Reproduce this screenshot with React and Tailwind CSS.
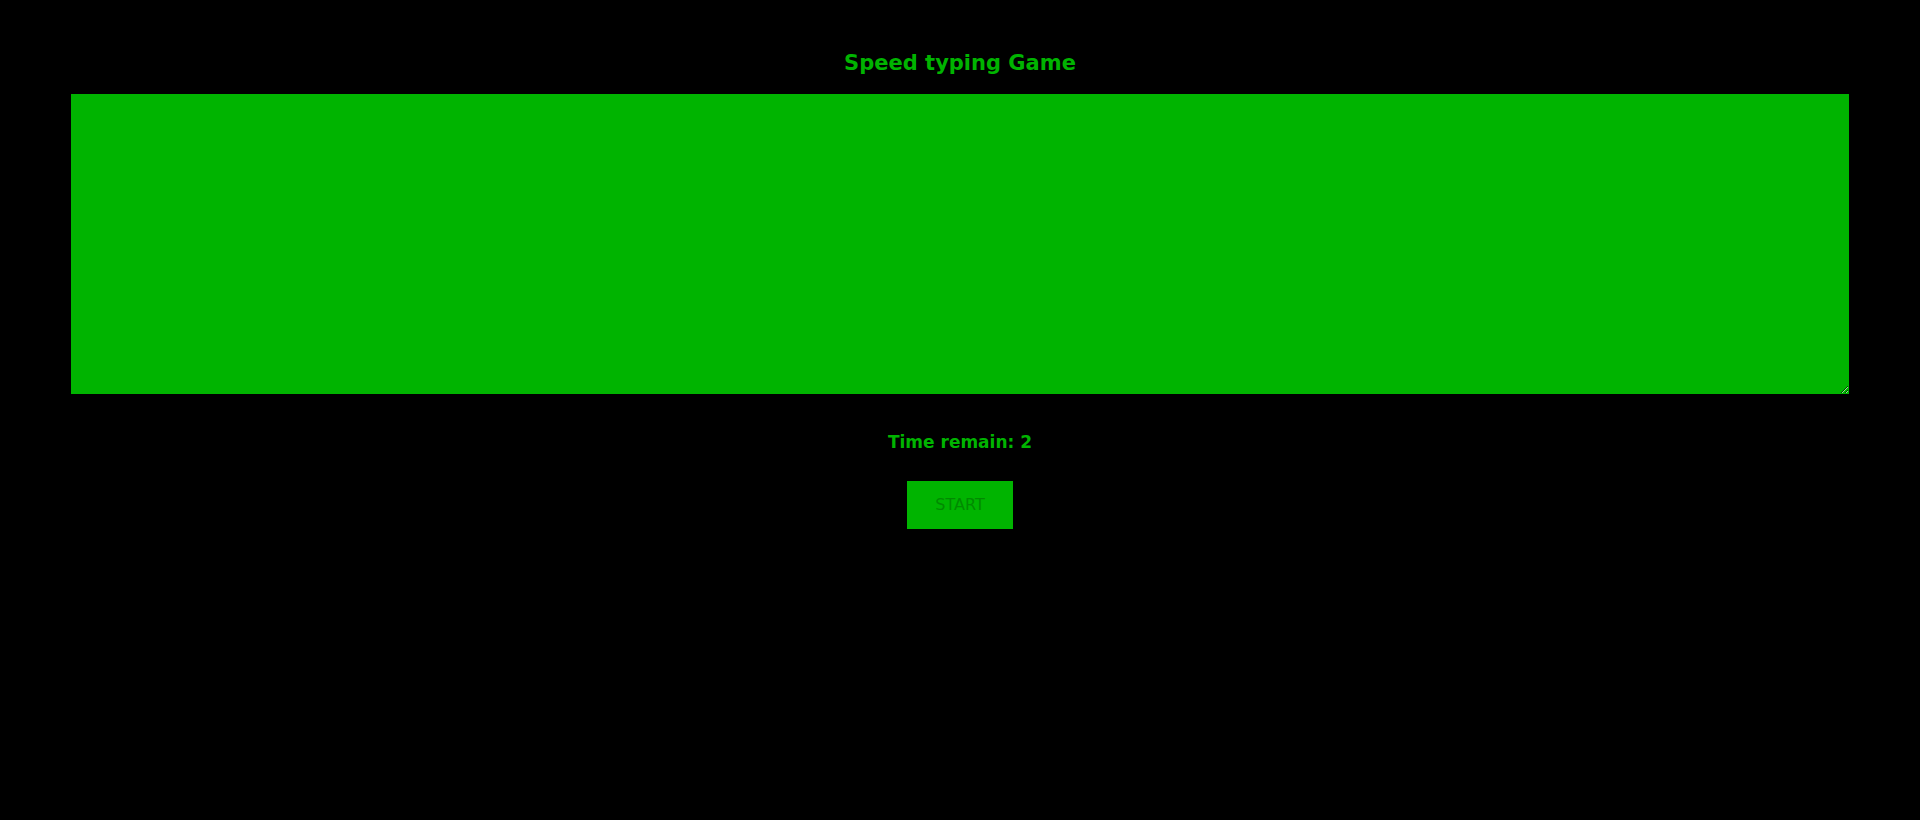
import { useState } from 'react'

const font = { fontFamily: '"Comic Sans MS", "DejaVu Sans", sans-serif' }

const App = () => {
  const [text, setText] = useState('')
  const [time] = useState(2)

  return (
    <div className="h-[820px] bg-black flex flex-col items-center" style={font}>
      <h1 className="mt-[48px] h-[30px] leading-[30px] text-[21px] font-bold text-[#00b400]">
        Speed typing Game
      </h1>

      <textarea
        value={text}
        onChange={e => setText(e.target.value)}
        className="mt-[16px] block w-[1778px] h-[300px] bg-[#00b400] outline-none border-0"
      />

      <p className="mt-[37px] h-[22px] leading-[22px] text-[17px] font-bold text-[#00b400]">
        Time remain: {time}
      </p>

      <button className="mt-[28px] w-[106px] h-[48px] bg-[#00b400] text-[#008a00] text-[16px]">
        START
      </button>
    </div>
  )
}

export default App
